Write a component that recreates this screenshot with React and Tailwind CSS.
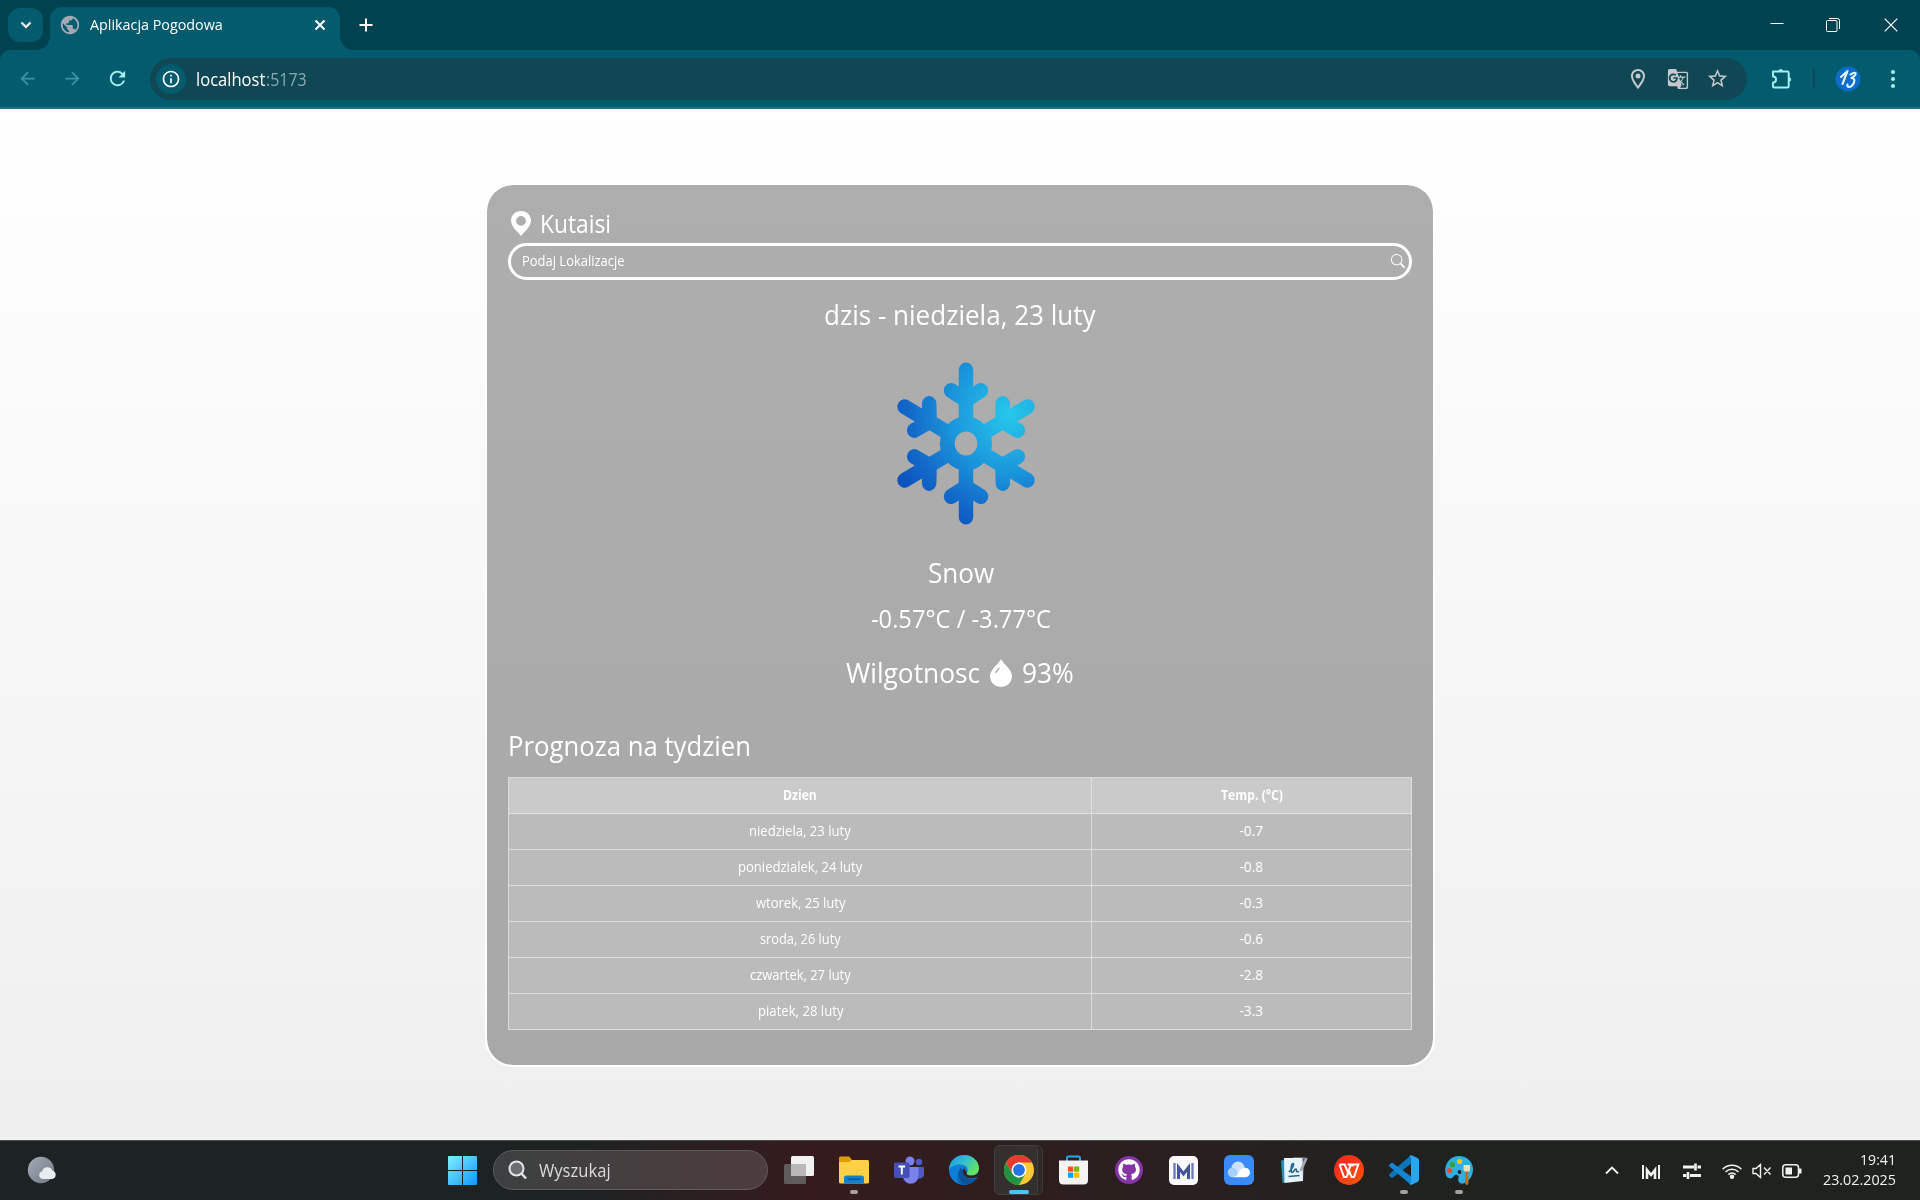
import { useLayoutEffect, useRef, useState } from "react";
import {
  MdArrowBack,
  MdArrowForward,
  MdRefresh,
  MdInfoOutline,
  MdPublic,
  MdGTranslate,
  MdOutlineLocationOn,
  MdStarBorder,
} from "react-icons/md";
import { BsSearch } from "react-icons/bs";
import { FaGithub } from "react-icons/fa";

/* One line of text condensed or widened to a given width. */
function Fit({ w, className = "", children }) {
  const ref = useRef(null);
  const [scale, setScale] = useState(1);
  useLayoutEffect(() => {
    const natural = ref.current.offsetWidth;
    if (natural) setScale(w / natural);
  }, [w, children]);
  return (
    <span className={"inline-flex shrink-0 " + className} style={{ width: w }}>
      <span
        ref={ref}
        className="inline-block origin-left whitespace-nowrap shrink-0"
        style={{ transform: `scaleX(${scale})` }}
      >
        {children}
      </span>
    </span>
  );
}

function TabStrip() {
  return (
    <div className="flex h-[50px] bg-[#004250] text-white">
      <div className="ml-2 mt-2 flex h-[34px] w-[35px] items-center justify-center rounded-xl bg-[#035b6d]">
        <svg width="12" height="8" viewBox="0 0 12 8" fill="none" stroke="white" strokeWidth="2.2">
          <path d="M1.5 1.5 6 6l4.500-4.500" />
        </svg>
      </div>
      <svg className="mt-[36px] -ml-[7px]" width="14" height="14" viewBox="0 0 14 14" fill="#035b6d">
        <path d="M14 0v14H0C8 14 14 8 14 0z" />
      </svg>
      <div className="mt-[7px] flex h-[43px] w-[290px] items-center rounded-t-xl bg-[#035b6d]">
        <MdPublic className="ml-[9px] mb-[7px] text-[#a3a9b4]" size={22} />
        <Fit w={133} className="ml-[9px] mb-[8px] text-[14px] leading-5">Aplikacja Pogodowa</Fit>
        <svg className="ml-auto mr-[14px] mb-[7px]" width="12" height="12" viewBox="0 0 12 12" stroke="white" strokeWidth="2">
          <path d="M1.500 1.500l9 9M10.500 1.500l-9 9" />
        </svg>
      </div>
      <svg className="mt-[36px]" width="14" height="14" viewBox="0 0 14 14" fill="#035b6d">
        <path d="M0 0v14h14C6 14 0 8 0 0z" />
      </svg>
      <svg className="ml-[5px] mt-[18px]" width="14" height="14" viewBox="0 0 14 14" stroke="white" strokeWidth="2">
        <path d="M7 .5v13M.5 7h13" />
      </svg>
      <div className="ml-auto flex items-center gap-[42px] pr-[22px]">
        <svg width="14" height="14" viewBox="0 0 14 14" stroke="white">
          <path d="M.5 5.500h13" />
        </svg>
        <svg width="14" height="14" viewBox="0 0 14 14" fill="none" stroke="white">
          <rect x=".5" y="2.500" width="10.500" height="11" rx="1" />
          <path d="M3 .5h8.500a2 2 0 0 1 2 2V11" />
        </svg>
        <svg className="ml-[2px]" width="14" height="14" viewBox="0 0 14 14" stroke="white" strokeWidth="1.200">
          <path d="M.7.7l12.600 12.600M13.300.7.7 13.300" />
        </svg>
      </div>
    </div>
  );
}

function Toolbar() {
  return (
    <div className="bg-[#004250]">
      <div className="flex h-[59px] items-center rounded-t-[10px] border-b-2 border-[#1e7384] bg-[#035b6d]">
        <MdArrowBack className="ml-[17px] text-[#3f93a0]" size={21} />
        <MdArrowForward className="ml-[24px] text-[#3f93a0]" size={21} />
        <MdRefresh className="ml-[23px] text-[#a2eff0]" size={23} />
        <div className="ml-[21px] flex h-[42px] w-[1597px] items-center rounded-full bg-[#0f4854]">
          <div className="ml-[6px] flex h-[30px] w-[30px] items-center justify-center rounded-full bg-[#035b6d]">
            <MdInfoOutline className="text-white" size={20} />
          </div>
          <div className="ml-[10px] flex text-[17.500px] leading-[24px]">
            <Fit w={69} className="text-white">localhost</Fit>
            <Fit w={41} className="ml-px text-[#8aa9b0]">:5173</Fit>
          </div>
          <div className="ml-auto mr-[18px] flex items-center text-[#c6c8cb]">
            <MdOutlineLocationOn size={24} />
            <MdGTranslate className="ml-[17px]" size={22} />
            <MdStarBorder className="ml-[17px]" size={23} />
          </div>
        </div>
        <svg className="ml-[24px]" width="22" height="22" viewBox="0 0 22 22" fill="none" stroke="#a2eff0" strokeWidth="2" strokeLinejoin="round">
          <path d="M2 3.500h14.500q1.200 0 1.200 1.200v13.500q0 1.300-1.200 1.300H3.200Q2 19.500 2 18.200V14.500a3 3 0 0 0 0-6z" />
          <path d="M7.700 3.500a2 2 0 0 1 4 0zM17.700 9.500a2 2 0 0 1 0 4z" fill="#a2eff0" strokeWidth="1" />
        </svg>
        <div className="ml-[20px] h-[20px] w-[2px] bg-[#0f4854]" />
        <svg className="ml-[20px]" width="26" height="26" viewBox="0 0 26 26">
          <circle cx="13" cy="13" r="12.500" fill="#0e6cc9" />
          <path d="M6 11 12.500 5 7.500 18M15.500 8.500q3.500-2.500 5-1.500 1 2-4 5 4 .5 2.500 4.500-2 4.500-5 4.500-2 0-1.500-2.500" fill="none" stroke="#e6f6ff" strokeWidth="2.100" strokeLinecap="round" strokeLinejoin="round" />
        </svg>
        <svg className="ml-[29px]" width="6" height="20" viewBox="0 0 6 20" fill="#a2eff0">
          <circle cx="3" cy="3" r="2.100" />
          <circle cx="3" cy="10" r="2.100" />
          <circle cx="3" cy="17" r="2.100" />
        </svg>
      </div>
    </div>
  );
}

function Snowflake() {
  return (
    <svg width="170" height="189" viewBox="-85 -94.500 170 189" className="ml-3">
      <defs>
        <radialGradient id="ice" gradientUnits="userSpaceOnUse" cx="44" cy="-30" r="130">
          <stop offset="0" stopColor="#26c8ea" />
          <stop offset=".45" stopColor="#1b97dc" />
          <stop offset=".75" stopColor="#136cca" />
          <stop offset="1" stopColor="#0b50bd" />
        </radialGradient>
        <mask id="flake" maskUnits="userSpaceOnUse" x="-85" y="-95" width="170" height="190">
          <g transform="scale(.965 1)">
            {[0, 60, 120, 180, 240, 300].map((a) => (
              <path
                key={a}
                transform={`rotate(${a})`}
                d="M0 -15V-73.500M-15.500 -53L0 -43.500L15.500 -53"
                fill="none"
                stroke="white"
                strokeWidth="15"
                strokeLinecap="round"
                strokeLinejoin="round"
              />
            ))}
            <circle r="27" fill="white" />
          </g>
          <ellipse rx="11.300" ry="12" fill="black" />
        </mask>
      </defs>
      <rect x="-85" y="-94" width="170" height="188" fill="url(#ice)" mask="url(#flake)" />
    </svg>
  );
}

const DAYS = [
  ["niedziela, 23 luty", 102, "-0.7"],
  ["poniedzialek, 24 luty", 124, "-0.8"],
  ["wtorek, 25 luty", 89, "-0.3"],
  ["sroda, 26 luty", 81, "-0.6"],
  ["czwartek, 27 luty", 101, "-2.8"],
  ["piatek, 28 luty", 85, "-3.3"],
];

function Forecast() {
  return (
    <div className="border-l border-t border-[#dee2e6]/90 text-[13.600px] leading-[20px]">
      <div className="grid grid-cols-[583px_320px] bg-[#cacaca] font-bold">
        <div className="flex h-9 items-center justify-center border-b border-r border-[#dee2e6]/90 pb-[2px]">
          <Fit w={34}>Dzien</Fit>
        </div>
        <div className="flex h-9 items-center justify-center border-b border-r border-[#dee2e6]/90 pb-[2px]">
          <Fit w={62}>Temp. (°C)</Fit>
        </div>
      </div>
      {DAYS.map(([day, w, temp]) => (
        <div key={day} className="grid grid-cols-[583px_320px] bg-[#bbbbbb]">
          <div className="flex h-9 items-center justify-center border-b border-r border-[#dee2e6]/90 pb-[2px]">
            <Fit w={w}>{day}</Fit>
          </div>
          <div className="flex h-9 items-center justify-center border-b border-r border-[#dee2e6]/90 pb-[2px]">
            <Fit w={24}>{temp}</Fit>
          </div>
        </div>
      ))}
    </div>
  );
}

function WeatherCard() {
  return (
    <div className="flex h-[884px] w-[950px] flex-col rounded-[28px] border-2 border-white bg-linear-to-b from-[#aeaeae] to-[#a8a8a8] bg-clip-padding px-[21px] pt-[19px] text-[27.300px] leading-[38px] text-white">
      <div className="flex h-[39px] items-center text-[25px]">
        <svg className="ml-[3px]" width="20" height="25" viewBox="0 0 20 25" fill="white" fillRule="evenodd">
          <path d="M10 0c5.700 0 10 4.200 10 9.600C20 16 13.500 20.500 10 25 6.500 20.500 0 16 0 9.600 0 4.200 4.300 0 10 0zm0 5a4.900 4.900 0 1 0 0 9.800A4.900 4.900 0 0 0 10 5z" />
        </svg>
        <Fit w={71} className="ml-[9px] mb-[2px]">Kutaisi</Fit>
      </div>
      <div className="flex h-[37px] items-center rounded-full border-[3px] border-white pl-[11px] pr-[4px] text-[13.600px] leading-[20px]">
        <Fit w={103} className="mb-[2px]">Podaj Lokalizacje</Fit>
        <BsSearch className="ml-auto mb-px" size={14} />
      </div>
      <div className="flex h-[69px] items-center justify-center">
        <Fit w={272}>dzis - niedziela, 23 luty</Fit>
      </div>
      <div className="flex h-[189px] justify-center">
        <Snowflake />
      </div>
      <div className="flex h-[68px] items-center justify-center pt-[2px]">
        <Fit w={66} className="ml-px">Snow</Fit>
      </div>
      <div className="flex h-6 items-center justify-center pt-[2px] text-[24.600px]">
        <Fit w={180} className="ml-px">-0.57°C / -3.77°C</Fit>
      </div>
      <div className="flex h-[84px] items-center justify-center pt-[2px]">
        <Fit w={134}>Wilgotnosc</Fit>
        <svg className="mx-[10px]" width="22" height="28" viewBox="0 0 22 28">
          <path d="M11 0c2 4.500 11 10.500 11 17.200A10.900 10.900 0 0 1 11 28 10.900 10.900 0 0 1 0 17.200C0 10.500 9 4.500 11 0z" fill="white" />
          <path d="M5.600 13.500 9 9.300" stroke="#ababab" strokeWidth="1.300" strokeLinecap="round" />
        </svg>
        <Fit w={52}>93%</Fit>
      </div>
      <div className="flex h-[63px] items-center">
        <Fit w={243}>Prognoza na tydzien</Fit>
      </div>
      <Forecast />
    </div>
  );
}

function Cell({ mark, children }) {
  return (
    <div className="relative flex h-[60px] w-[55px] shrink-0 items-center justify-center">
      {children}
      {mark && <span className="absolute bottom-[6px] h-1 w-2 rounded-full bg-[#a3a1a0]" />}
    </div>
  );
}

function Apps() {
  return (
    <div className="mb-px flex">
      <Cell>
        <svg width="30" height="28" viewBox="0 0 30 28">
          <rect y="8" width="22" height="20" rx="1.500" fill="#5e5c5c" />
          <rect x="7" width="23" height="20" rx="1.500" fill="#f1f1f1" />
          <path d="M7 8h14.500q.5 0 .5.500V20H8.500Q7 20 7 18.500z" fill="#b9b7b7" />
        </svg>
      </Cell>
      <Cell mark>
        <svg width="30" height="28" viewBox="0 0 30 28">
          <path d="M0 2q0-1.500 1.500-1.500h8.700L13 4H28q1 0 1 1v5H0z" fill="#e19c05" />
          <path d="M0 6h10l3-2h15.500Q30 4 30 5.500v20.500q0 1.500-1.500 1.500h-27Q0 27.500 0 26z" fill="#ffcf46" />
          <path d="M5 27.500v-5.500q0-2.500 2.500-2.500h15q2.500 0 2.500 2.500v5.500z" fill="#1080cf" />
          <path d="M8.500 23.200h12.800" stroke="#0a4f8c" strokeWidth="1.300" />
        </svg>
      </Cell>
      <Cell>
        <svg width="30" height="28" viewBox="0 0 30 28">
          <circle cx="25" cy="6" r="3.200" fill="#5059c9" />
          <circle cx="16" cy="5" r="4.500" fill="#7b83eb" />
          <path d="M21 11h8q1 0 1 1v6.500a5 5 0 0 1-9 2z" fill="#5059c9" />
          <path d="M9 11h14.500q1 0 1 1v8a7.600 7.600 0 0 1-15.500 0z" fill="#7b83eb" />
          <rect y="6.500" width="15.500" height="15.500" rx="1.500" fill="#464eb8" />
          <path d="M4.500 10.500h6.600M7.800 10.500v8" stroke="white" strokeWidth="1.900" />
        </svg>
      </Cell>
      <Cell>
        <svg width="30" height="30" viewBox="0 0 30 30">
          <defs>
            <linearGradient id="edgeTop" x1="0" y1="0" x2="1" y2=".6">
              <stop offset="0" stopColor="#1f93e0" />
              <stop offset=".5" stopColor="#32bdd4" />
              <stop offset="1" stopColor="#66e45a" />
            </linearGradient>
          </defs>
          <circle cx="15" cy="15" r="15" fill="#0d7fd6" />
          <path d="M0 13C1.500 5 7.500 0 15 0c8.500 0 15 6 15 13 0 5-3.500 7.500-8 7.500-3.500 0-5-1.300-4-2.700 2.500-4-1-8.300-6.500-8.300C6 9.500 1 11.500 0 15z" fill="url(#edgeTop)" />
          <path d="M11 12c-6 6-2 17 7 17.700C10 31 8 27 8 21c0-4 1-7 3-9z" fill="#0a63b4" />
          <path d="M12 12.500C6 19 11 30 18 29.500c5-.8 8.500-3.500 10.300-6.700C23 25.500 14 23.500 14 16z" fill="#0c519b" />
          <path d="M15 13c-4 6 3 13.500 13.700 9L30 20V14c0 5-4 6.500-8 6.500-3.500 0-5-1.300-4-2.700z" fill="#2a2422" />
        </svg>
      </Cell>
      <div className="relative flex h-[60px] w-[55px] shrink-0 items-center justify-center">
        <span className="absolute left-[9px] top-[5px] h-[50px] w-[43px] rounded-md border border-[#3e3a37] bg-[#2d2926]" />
        <span className="absolute left-[3px] top-[5px] h-[50px] w-[44px] rounded-md border border-[#44403d] bg-[#34302d]" />
        <span className="absolute bottom-[6px] left-[18px] h-1 w-5 rounded-full bg-[#4cc2ff]" />
        <svg className="relative" width="30" height="30" viewBox="-15 -15 30 30">
          <circle r="15" fill="#fcc934" />
          <path d="M-13 -7.500A15 15 0 0 1 13 -7.500H0L-6.500 3.750z" fill="#e33b2e" />
          <path d="M-13 -7.500A15 15 0 0 0 0 15L6.500 3.750H-6.500z" fill="#229342" />
          <circle r="7.500" fill="white" />
          <circle r="5.900" fill="#2473e8" />
        </svg>
      </div>
      <Cell>
        <svg width="29" height="30" viewBox="0 0 29 30">
          <path d="M8 6V3q0-1.500 1.500-1.500h10Q21 1.500 21 3v3" fill="none" stroke="#23a5ea" strokeWidth="2" />
          <path d="M0 5.500h29V25q0 4.500-4.500 4.500h-20Q0 29.500 0 25z" fill="#f3f3f4" />
          <path d="M9 11.500h5.200v5.200H9z" fill="#f25022" />
          <path d="M15 11.500h5.200v5.200H15z" fill="#7fba00" />
          <path d="M9 17.600h5.200v5.200H9z" fill="#00a4ef" />
          <path d="M15 17.600h5.200v5.200H15z" fill="#ffb900" />
        </svg>
      </Cell>
      <Cell>
        <div className="flex h-[28px] w-[28px] items-center justify-center rounded-full bg-[#8534a6] text-white">
          <FaGithub size={22} />
        </div>
      </Cell>
      <Cell>
        <svg width="29" height="29" viewBox="0 0 29 29">
          <rect width="29" height="29" rx="5" fill="#fafafe" />
          <path d="M5.500 7v16M23.500 7v16" stroke="#6a78bb" strokeWidth="2.300" />
          <path d="M9.500 23V11.500l5 6.500 5-6.500V23" fill="none" stroke="#44559f" strokeWidth="3" />
        </svg>
      </Cell>
      <Cell>
        <svg width="30" height="30" viewBox="0 0 30 30">
          <rect width="30" height="30" rx="6" fill="#3a8bf7" />
          <circle cx="14" cy="13" r="6.500" fill="#cbe3ff" />
          <circle cx="8.500" cy="17.500" r="4.800" fill="#a9cfff" />
          <path d="M8.500 22.300h13a4.800 4.800 0 1 0-2-9.300q-3.500.5-4.500 4-2.500 4.500-6.500 5.300z" fill="white" />
        </svg>
      </Cell>
      <Cell>
        <svg width="28" height="28" viewBox="0 0 28 28">
          <path d="M1 4.500 5 4v22.500l-2.500.5z" fill="#2790b8" />
          <path d="M13 1h12l-2 24h-8z" fill="#5e56a8" />
          <path d="M4 2h18.500L23 25 4.500 27z" fill="#e8f2f9" />
          <path d="M9 16c4-4 5.500-8 4-8.500-2 0-2.500 9-1 9 2 0 2.500-4 4-3.500 1 .5-.5 4 3 2.500M8.500 20.500l11-1" fill="none" stroke="#1f6591" strokeWidth="1.600" />
          <path d="m26.500 2-6 13" stroke="#aaa" strokeWidth="2.600" />
        </svg>
      </Cell>
      <Cell>
        <svg width="30" height="30" viewBox="0 0 30 30">
          <defs>
            <linearGradient id="wps" x1="0" y1="0" x2="1" y2="1">
              <stop offset="0" stopColor="#fc1c22" />
              <stop offset="1" stopColor="#fd5a06" />
            </linearGradient>
          </defs>
          <circle cx="15" cy="15" r="15" fill="url(#wps)" />
          <path d="M5.500 9.500h5.200L15 20M5.500 9.500 10 22h2.500l4-11.500h3.200M13.500 9.500h10.800L20 22h-2.500l-2.200-6" fill="none" stroke="white" strokeWidth="2" />
        </svg>
      </Cell>
      <Cell mark>
        <svg width="30" height="30" viewBox="0 0 30 30">
          <path d="M22 0v8.500L4 22.500q-1 .7-2 0l-1.500-1.500q-1-1 0-2z" fill="#0b75bb" />
          <path d="M22 30v-8.500L4 8.200q-1-.7-2 0L.5 9.500q-1 1 0 2z" fill="#1287d2" />
          <path d="M20.500 1.200 22 0l6.500 3Q30 3.700 30 5.300v19.400q0 1.600-1.500 2.300L22 30l-1.500-1.200q1.500-.5 1.500-3V4.200q0-2.500-1.500-3z" fill="#2aa6ef" />
        </svg>
      </Cell>
      <Cell mark>
        <svg width="28" height="30" viewBox="0 0 28 30">
          <path d="M14 1C22 1 28 7 28 14c0 8-5 13-9.500 14.500-5 1-6-3-5-5.500 1-3-3-4.500-4.500-2-2 3-5 3-7 1-5-9 1-21 12-21z" fill="#30aee0" />
          <circle cx="14.500" cy="6.500" r="2.600" fill="#f9c513" />
          <circle cx="7.300" cy="9.500" r="2.600" fill="#33a52c" />
          <circle cx="4.500" cy="15.500" r="2.600" fill="#e2502b" />
          <circle cx="14.500" cy="17" r="1.900" fill="#242120" />
          <path d="M18.500 10h6.500v5q-1 1.500-2 2h-2.500q-1.500-1-2-2z" fill="#f0dcc0" />
          <path d="M20.500 16.500h2.600l.4 12q-1.500 3-3.300 0z" fill="#b96f1b" />
        </svg>
      </Cell>
    </div>
  );
}

function Tray() {
  return (
    <div className="ml-auto flex items-center pr-[24px] text-[#f1f1f1]">
      <svg width="14" height="9" viewBox="0 0 14 9" fill="none" stroke="currentColor" strokeWidth="1.800">
        <path d="m1 7.500 6-6 6 6" />
      </svg>
      <svg className="ml-[23px] mt-[2px]" width="18" height="14" viewBox="0 0 18 14" fill="none" stroke="currentColor" strokeWidth="2">
        <path d="M1 0v14M17 0v14" />
        <path d="M5 14V5L9 10l4-5v9" strokeWidth="2.600" />
      </svg>
      <svg className="ml-[23px]" width="18" height="16" viewBox="0 0 18 16" fill="none" stroke="currentColor" strokeWidth="3">
        <path d="M0 4h11M14.500 4H18M7 12.500h11M0 12.500h3.500" />
        <path d="M12.500.5v7M5 9v7" strokeWidth="2.600" />
      </svg>
      <svg className="ml-[21px]" width="20" height="16" viewBox="0 0 20 16" fill="none" stroke="currentColor" strokeWidth="1.600">
        <path d="M.7 6.200a13 13 0 0 1 18.600 0M3.500 9a9.200 9.200 0 0 1 13 0M6.400 11.600a5.200 5.200 0 0 1 7.200 0" />
        <circle cx="10" cy="13.800" r="1.400" fill="currentColor" />
      </svg>
      <svg className="ml-[10px]" width="20" height="16" viewBox="0 0 20 16" fill="none" stroke="currentColor" strokeWidth="1.400">
        <path d="M1 5.500h3L8.500 1.500v13L4 10.500H1zM12 4.500l6.500 7M18.500 4.500l-6.500 7" />
      </svg>
      <svg className="ml-[10px]" width="20" height="14" viewBox="0 0 20 14" fill="none" stroke="currentColor" strokeWidth="1.500">
        <rect x=".8" y=".8" width="15.700" height="12.400" rx="3" />
        <path d="M18 4.500v5" strokeWidth="3" />
        <rect x="3.500" y="3.500" width="6.500" height="7" fill="currentColor" strokeWidth="0" />
      </svg>
      <div className="mb-[2px] ml-[21px] flex flex-col items-end text-[14.500px] leading-[20px]">
        <Fit w={36}>19:41</Fit>
        <Fit w={73}>23.02.2025</Fit>
      </div>
    </div>
  );
}

function Taskbar() {
  return (
    <div className="flex h-[60px] items-center border-t border-[#4a4e4b] bg-linear-to-r from-[#1d2223] from-30% via-[#351b1e] via-42% to-[#1f221f] to-75%">
      <svg className="ml-[27px] mb-px" width="30" height="28" viewBox="0 0 30 28">
        <defs>
          <linearGradient id="moon" x1="0" y1="0" x2="1" y2="1">
            <stop offset="0" stopColor="#a4abb6" />
            <stop offset="1" stopColor="#6f7782" />
          </linearGradient>
        </defs>
        <circle cx="14" cy="14" r="13.200" fill="url(#moon)" />
        <path d="M15.500 23a4 4 0 0 1-.3-7.800 5.500 5.500 0 0 1 10.300-.5A4.300 4.300 0 0 1 25.500 23z" fill="#e9ecf0" />
      </svg>
      <svg className="ml-[391px]" width="29" height="29" viewBox="0 0 29 29">
        <defs>
          <linearGradient id="win" x1="0" y1="0" x2="29" y2="29" gradientUnits="userSpaceOnUse">
            <stop offset="0" stopColor="#7ff0ff" />
            <stop offset="1" stopColor="#0f97fb" />
          </linearGradient>
        </defs>
        <path d="M0 1Q0 0 1 0h13v14H0zM15 0h13q1 0 1 1v13H15zM0 15h14v14H1q-1 0-1-1zM15 15h14v13q0 1-1 1H15z" fill="url(#win)" />
      </svg>
      <div className="ml-[16px] mr-[3px] mb-px flex h-10 w-[275px] items-center rounded-full border border-[#5e5b5b] bg-linear-to-r from-[#3c4040] to-[#4e3c3f] text-[#dcdcdc]">
        <svg className="ml-[14px]" width="19" height="20" viewBox="0 0 19 20" fill="none" stroke="#e4e6e8" strokeWidth="2">
          <circle cx="8.500" cy="8.500" r="7" fill="#6b6e70" />
          <path d="m13.500 13.500 4.500 5" strokeWidth="2.400" />
        </svg>
        <Fit w={72} className="ml-[12px] text-[17.500px] leading-[24px]">Wyszukaj</Fit>
      </div>
      <Apps />
      <Tray />
    </div>
  );
}

export default function App() {
  return (
    <div className="flex h-[1200px] w-[1920px] flex-col overflow-hidden font-['Open_Sans','Noto_Sans',sans-serif]">
      <TabStrip />
      <Toolbar />
      <main className="flex flex-1 justify-center bg-linear-to-b from-white to-[#efefef] pt-[74px]">
        <WeatherCard />
      </main>
      <Taskbar />
    </div>
  );
}
